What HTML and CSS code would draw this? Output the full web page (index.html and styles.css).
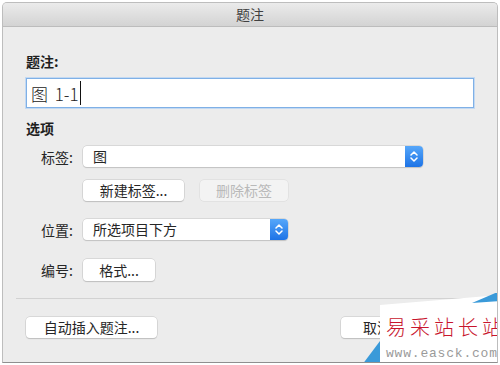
FILE: index.html
```html
<!DOCTYPE html>
<html lang="zh-CN">
<head>
	<meta charset="UTF-8">
	<title>题注</title>
	<link rel="stylesheet" href="styles.css">
</head>
<body>
	<div class="window">
		<div class="titlebar">题注</div>
		<div class="content">
			<div class="heading">题注:</div>
			<div class="field"><span class="field-text">图 1-1</span><span class="caret"></span></div>

			<div class="heading section">选项</div>

			<div class="row row-label">
				<span class="label">标签:</span>
				<div class="select select-wide">
					<span class="select-text">图</span>
					<span class="stepper">
						<svg width="8" height="13" viewBox="0 0 8 13"><path d="M1 5 L4 2 L7 5 M1 8 L4 11 L7 8" fill="none" stroke="#fff" stroke-width="1.5" stroke-linecap="round" stroke-linejoin="round"/></svg>
					</span>
				</div>
			</div>

			<div class="row row-buttons">
				<span class="label"></span>
				<div class="btn btn-new">新建标签...</div>
				<div class="btn btn-del disabled">删除标签</div>
			</div>

			<div class="row row-pos">
				<span class="label">位置:</span>
				<div class="select select-short">
					<span class="select-text">所选项目下方</span>
					<span class="stepper">
						<svg width="8" height="13" viewBox="0 0 8 13"><path d="M1 5 L4 2 L7 5 M1 8 L4 11 L7 8" fill="none" stroke="#fff" stroke-width="1.5" stroke-linecap="round" stroke-linejoin="round"/></svg>
					</span>
				</div>
			</div>

			<div class="row row-num">
				<span class="label">编号:</span>
				<div class="btn btn-format">格式...</div>
			</div>

			<div class="sep"></div>

			<div class="footer">
				<div class="btn btn-auto">自动插入题注...</div>
				<div class="footer-right">
					<div class="btn btn-cancel">取消</div>
					<div class="btn btn-ok">确定</div>
				</div>
			</div>
		</div>

		<div class="watermark">
			<svg class="wm-shape" width="140" height="72" viewBox="0 0 140 72">
				<polygon points="20,12 140,2 140,72 20,72" fill="#fff"/>
				<polygon points="112,10 140,-2 140,8" fill="#3a9ad9"/>
				<polygon points="20,48 20,72 2,72" fill="#3a9ad9"/>
			</svg>
			<div class="wm-title">易采站长站</div>
			<div class="wm-url">www.easck.com</div>
		</div>
	</div>
</body>
</html>
```

FILE: styles.css
```css
body{
	margin: 0;
	background: #fff;
	font-family: "Noto Sans CJK SC", "Liberation Sans", sans-serif;
	color: #262626;
	font-size: 14px;
}

.window{
	position: relative;
	margin: 2px 2px 0 2px;
	height: 359px;
	background: #ececec;
	border: 1px solid #bdbdbd;
	border-bottom-color: #8f8f8f;
	border-radius: 5px 5px 0 0;
	overflow: hidden;
}

.titlebar{
	height: 23px;
	line-height: 23px;
	text-align: center;
	font-size: 14px;
	color: #404040;
	background: linear-gradient(#ebebeb, #d3d3d3);
	border-bottom: 1px solid #bcbcbc;
}

.content{
	padding: 24px 23px 0 23px;
}

.heading{
	font-weight: bold;
	line-height: 20px;
	height: 20px;
	color: #1e1e1e;
}

.section{
	margin-top: 10px;
}

.field{
	margin-top: 7px;
	height: 28px;
	background: #fff;
	border: 1px solid #7fb0e6;
	box-shadow: 0 0 0 1px #c3d9f2;
	display: flex;
	align-items: center;
	padding-left: 4px;
}

.field-text{
	font-size: 17px;
	font-weight: 300;
	color: #222;
	word-spacing: 3px;
}

.caret{
	display: inline-block;
	width: 1px;
	height: 24px;
	background: #111;
	margin-left: 1px;
}

.row{
	display: flex;
	align-items: center;
	gap: 10px;
}

.label{
	width: 47px;
	text-align: right;
	flex-shrink: 0;
}

.row-label{ margin-top: 8px; }
.row-buttons{ margin-top: 13px; }
.row-pos{ margin-top: 18px; }
.row-num{ margin-top: 19px; }

.select{
	display: flex;
	align-items: stretch;
	height: 21px;
	background: #fff;
	border-radius: 4px;
	box-shadow: 0 0 0 0.5px #c4c4c4, 0 1px 1px rgba(0,0,0,0.18);
}

.select-wide{ width: 340px; }
.select-short{ width: 205px; }

.select-text{
	flex: 1;
	line-height: 21px;
	padding-left: 10px;
}

.stepper{
	width: 18px;
	display: flex;
	align-items: center;
	justify-content: center;
	border-radius: 0 4px 4px 0;
	background: linear-gradient(#56a7fa, #1d73e6);
}

.btn{
	height: 21px;
	line-height: 21px;
	text-align: center;
	background: #fff;
	border-radius: 4px;
	box-shadow: 0 0 0 0.5px #c4c4c4, 0 1px 1px rgba(0,0,0,0.2);
	color: #262626;
}

.btn-new{ width: 101px; }
.btn-del{ width: 88px; margin-left: 6px; }
.btn-format{ width: 72px; height: 22px; line-height: 22px; }

.disabled{
	background: #f3f3f3;
	color: #b9b9b9;
	box-shadow: 0 0 0 0.5px #d8d8d8;
}

.sep{
	height: 1px;
	background: #d2d2d2;
	margin: 17px -10px 0 -10px;
}

.footer{
	margin-top: 18px;
	display: flex;
	justify-content: space-between;
}

.btn-auto{ width: 131px; }

.footer-right{
	display: flex;
	gap: 12px;
}

.btn-cancel{ width: 72px; }
.btn-ok{ width: 49px; }

.watermark{
	position: absolute;
	left: 357px;
	top: 290px;
	width: 140px;
	height: 72px;
}

.wm-shape{
	position: absolute;
	left: 0;
	top: 0;
}

.wm-title{
	position: absolute;
	left: 26px;
	top: 21px;
	font-size: 20px;
	line-height: 26px;
	letter-spacing: 4px;
	color: #c8152d;
	white-space: nowrap;
	font-weight: 300;
}

.wm-url{
	position: absolute;
	left: 26px;
	top: 53px;
	font-family: "Liberation Mono", monospace;
	font-size: 13px;
	line-height: 16px;
	letter-spacing: 0.8px;
	color: #9a9a9a;
	white-space: nowrap;
}
```
